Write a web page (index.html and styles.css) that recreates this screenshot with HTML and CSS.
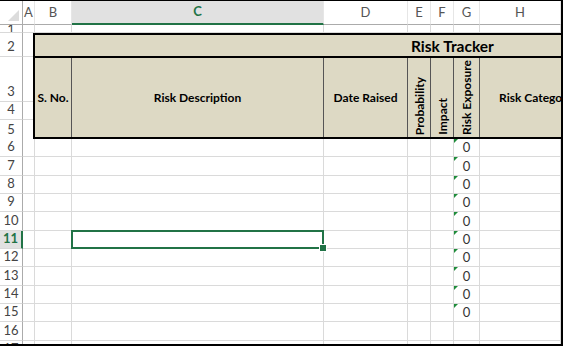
FILE: index.html
```html
<!DOCTYPE html>
<html lang="en">
  <head>
    <meta charset="UTF-8" />
    <meta name="viewport" content="width=device-width, initial-scale=1.0" />
    <link rel="stylesheet" href="styles.css">
  </head>
  <body>
    <div class="sheet">
      <!-- column letters -->
      <div class="colhead">
        <div class="rh corner"></div>
        <div class="ch col-a">A</div>
        <div class="ch col-b">B</div>
        <div class="ch col-c active">C</div>
        <div class="ch col-d">D</div>
        <div class="ch col-e">E</div>
        <div class="ch col-f">F</div>
        <div class="ch col-g">G</div>
        <div class="ch col-h">H</div>
      </div>

      <div class="row r1">
        <div class="rh">1</div>
        <div class="cell col-a"></div>
        <div class="cell col-b"></div>
        <div class="cell col-c"></div>
        <div class="cell col-d"></div>
        <div class="cell col-e"></div>
        <div class="cell col-f"></div>
        <div class="cell col-g"></div>
        <div class="cell col-h"></div>
      </div>

      <!-- rows 2 to 5: the tracker heading -->
      <div class="block">
        <div class="side">
          <div class="srow s2"><div class="rh">2</div><div class="sa"></div></div>
          <div class="srow s3"><div class="rh">3</div><div class="sa"></div></div>
          <div class="srow s4"><div class="rh">4</div><div class="sa"></div></div>
          <div class="srow s5"><div class="rh">5</div><div class="sa"></div></div>
        </div>
        <div class="tracker">
          <div class="title">Risk Tracker</div>
          <div class="heads">
            <div class="hc col-b">S. No.</div>
            <div class="hc col-c">Risk Description</div>
            <div class="hc col-d">Date Raised</div>
            <div class="hc col-e bottom"><span class="vt">Probability</span></div>
            <div class="hc col-f bottom"><span class="vt">Impact</span></div>
            <div class="hc col-g bottom"><span class="vt">Risk Exposure</span></div>
            <div class="hc col-h left">Risk Category</div>
          </div>
        </div>
      </div>

      <div class="row"><div class="rh">6</div><div class="cell col-a"></div><div class="cell col-b"></div><div class="cell col-c"></div><div class="cell col-d"></div><div class="cell col-e"></div><div class="cell col-f"></div><div class="cell col-g num">0</div><div class="cell col-h"></div></div>
      <div class="row"><div class="rh">7</div><div class="cell col-a"></div><div class="cell col-b"></div><div class="cell col-c"></div><div class="cell col-d"></div><div class="cell col-e"></div><div class="cell col-f"></div><div class="cell col-g num">0</div><div class="cell col-h"></div></div>
      <div class="row"><div class="rh">8</div><div class="cell col-a"></div><div class="cell col-b"></div><div class="cell col-c"></div><div class="cell col-d"></div><div class="cell col-e"></div><div class="cell col-f"></div><div class="cell col-g num">0</div><div class="cell col-h"></div></div>
      <div class="row"><div class="rh">9</div><div class="cell col-a"></div><div class="cell col-b"></div><div class="cell col-c"></div><div class="cell col-d"></div><div class="cell col-e"></div><div class="cell col-f"></div><div class="cell col-g num">0</div><div class="cell col-h"></div></div>
      <div class="row"><div class="rh">10</div><div class="cell col-a"></div><div class="cell col-b"></div><div class="cell col-c"></div><div class="cell col-d"></div><div class="cell col-e"></div><div class="cell col-f"></div><div class="cell col-g num">0</div><div class="cell col-h"></div></div>
      <div class="row"><div class="rh active">11</div><div class="cell col-a"></div><div class="cell col-b"></div><div class="cell col-c selected"></div><div class="cell col-d"></div><div class="cell col-e"></div><div class="cell col-f"></div><div class="cell col-g num">0</div><div class="cell col-h"></div></div>
      <div class="row"><div class="rh">12</div><div class="cell col-a"></div><div class="cell col-b"></div><div class="cell col-c"></div><div class="cell col-d"></div><div class="cell col-e"></div><div class="cell col-f"></div><div class="cell col-g num">0</div><div class="cell col-h"></div></div>
      <div class="row"><div class="rh">13</div><div class="cell col-a"></div><div class="cell col-b"></div><div class="cell col-c"></div><div class="cell col-d"></div><div class="cell col-e"></div><div class="cell col-f"></div><div class="cell col-g num">0</div><div class="cell col-h"></div></div>
      <div class="row"><div class="rh">14</div><div class="cell col-a"></div><div class="cell col-b"></div><div class="cell col-c"></div><div class="cell col-d"></div><div class="cell col-e"></div><div class="cell col-f"></div><div class="cell col-g num">0</div><div class="cell col-h"></div></div>
      <div class="row"><div class="rh">15</div><div class="cell col-a"></div><div class="cell col-b"></div><div class="cell col-c"></div><div class="cell col-d"></div><div class="cell col-e"></div><div class="cell col-f"></div><div class="cell col-g num">0</div><div class="cell col-h"></div></div>
      <div class="row"><div class="rh">16</div><div class="cell col-a"></div><div class="cell col-b"></div><div class="cell col-c"></div><div class="cell col-d"></div><div class="cell col-e"></div><div class="cell col-f"></div><div class="cell col-g"></div><div class="cell col-h"></div></div>
      <div class="row"><div class="rh">17</div><div class="cell col-a"></div><div class="cell col-b"></div><div class="cell col-c"></div><div class="cell col-d"></div><div class="cell col-e"></div><div class="cell col-f"></div><div class="cell col-g"></div><div class="cell col-h"></div></div>
    </div>
  </body>
</html>
```

FILE: styles.css
```css
* {
  box-sizing: border-box;
}
html,
body {
  margin: 0;
}
body {
  width: 563px;
  height: 346px;
  overflow: hidden;
  background: #fff;
  border-top: 1px solid #000;
  border-right: 2px solid #000;
  border-bottom: 2px solid #000;
  font-family: Lato, "Liberation Sans", sans-serif;
  color: #000;
}

/* column widths */
.col-a {
  width: 12px;
}
.col-b {
  width: 37px;
}
.col-c {
  width: 252px;
}
.col-d {
  width: 84px;
}
.col-e,
.col-f {
  width: 23px;
}
.col-g {
  width: 26px;
}
.col-h {
  flex: 1;
}

/* headers */
.colhead {
  display: flex;
  height: 24px;
}
.ch {
  flex: none;
  display: flex;
  justify-content: center;
  align-items: flex-end;
  padding-bottom: 4px;
  font-size: 13px;
  color: #555;
  border-right: 1px solid #e6e6e6;
  border-bottom: 1px solid #ababab;
}
.ch.col-h {
  flex: 1;
}
.ch.active {
  background: #e1e1e1;
  color: #217346;
  font-weight: bold;
  border-bottom: 2px solid #217346;
}

.rh {
  flex: none;
  width: 23px;
  display: flex;
  justify-content: center;
  align-items: flex-end;
  padding-bottom: 2px;
  font-size: 13px;
  color: #444;
  background: #fff;
  border-right: 1px solid #ababab;
  border-bottom: 1px solid #d9d9d9;
}
.rh.active {
  background: #e1e1e1;
  color: #217346;
  font-weight: bold;
  border-right: 2px solid #217346;
}
.corner {
  position: relative;
  border-bottom: 1px solid #ababab;
}
.corner::after {
  content: "";
  position: absolute;
  right: 3px;
  bottom: 3px;
  border-left: 11px solid transparent;
  border-bottom: 11px solid #dcdcdc;
}

/* grid rows */
.row {
  display: flex;
  height: 18.33px;
}
.r1 {
  height: 8px;
  overflow: hidden;
}
.r1 .rh {
  align-items: center;
  padding-bottom: 0;
  overflow: hidden;
}
.cell {
  flex: none;
  position: relative;
  border-right: 1px solid #dadada;
  border-bottom: 1px solid #dadada;
}
.cell.col-h {
  flex: 1;
}
.num {
  display: flex;
  justify-content: center;
  align-items: flex-end;
  padding-bottom: 1px;
  font-size: 13px;
  color: #333;
}
.num::before {
  content: "";
  position: absolute;
  left: 0;
  top: 0;
  border-top: 4px solid #1e8c3a;
  border-right: 4px solid transparent;
}
.selected::before {
  content: "";
  position: absolute;
  left: -1px;
  top: -1px;
  right: -1px;
  bottom: -1px;
  border: 2px solid #217346;
}
.selected::after {
  content: "";
  position: absolute;
  right: -4px;
  bottom: -4px;
  width: 6px;
  height: 6px;
  background: #217346;
  border: 1px solid #fff;
  z-index: 2;
}

/* tracker heading block */
.block {
  display: flex;
  height: 106px;
}
.side {
  display: flex;
  flex-direction: column;
  width: 33px;
}
.srow {
  display: flex;
}
.s2 {
  height: 24px;
}
.s3 {
  height: 45px;
}
.s4 {
  height: 18px;
}
.s5 {
  height: 19px;
}
.s5 .rh {
  border-bottom: none;
}
.sa {
  width: 10px;
  border-bottom: 1px solid #dadada;
}
.s5 .sa {
  border-bottom: none;
}
.tracker {
  flex: 1;
  display: flex;
  flex-direction: column;
  background: #ddd9c4;
  border: 2px solid #000;
  border-right: none;
}
.title {
  height: 23px;
  display: flex;
  align-items: center;
  padding-left: 376px;
  font-size: 15.5px;
  font-weight: bold;
  border-bottom: 2px solid #000;
}
.heads {
  flex: 1;
  display: flex;
}
.hc {
  flex: none;
  display: flex;
  justify-content: center;
  align-items: center;
  font-size: 12px;
  font-weight: bold;
  white-space: nowrap;
  border-right: 1px solid #555;
}
.hc.col-h {
  flex: 1;
  border-right: none;
}
.hc.bottom {
  align-items: flex-end;
  padding-bottom: 2px;
}
.hc.left {
  justify-content: flex-start;
  padding-left: 19px;
}
.vt {
  writing-mode: vertical-rl;
  transform: rotate(180deg);
}
```
